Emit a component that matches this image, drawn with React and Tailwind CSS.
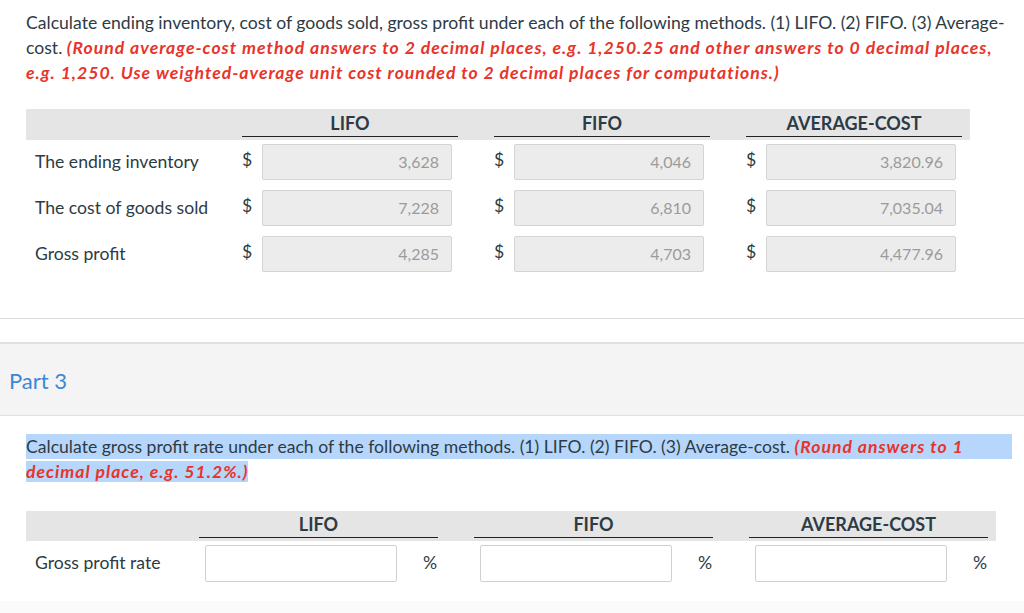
import React from 'react';

const rows = [
  { label: 'The ending inventory', values: ['3,628', '4,046', '3,820.96'] },
  { label: 'The cost of goods sold', values: ['7,228', '6,810', '7,035.04'] },
  { label: 'Gross profit', values: ['4,285', '4,703', '4,477.96'] },
];

const methods = ['LIFO', 'FIFO', 'AVERAGE-COST'];

const Red = ({ children }) => (
  <span className="font-bold italic tracking-[1px] text-[#e8342a]">{children}</span>
);

export default function App() {
  return (
    <div className="min-h-screen bg-white text-[#2d3b45] text-[17.6px]" style={{ fontFamily: 'Lato, "Open Sans", sans-serif' }}>
      {/* Part 2 question */}
      <div className="px-[26px] pt-[10px]">
        <p className="leading-[25px] whitespace-nowrap">
          Calculate ending inventory, cost of goods sold, gross profit under each of the following methods. (1) LIFO. (2) FIFO. (3) Average-
          <br />
          cost. <Red>(Round average-cost method answers to 2 decimal places, e.g. 1,250.25 and other answers to 0 decimal places,</Red>
          <br />
          <Red>e.g. 1,250. Use weighted-average unit cost rounded to 2 decimal places for computations.)</Red>
        </p>

        <div className="mt-[24px] w-[944px]">
          <div className="flex h-[31px] bg-[#e5e5e5]">
            <div className="w-[216px] shrink-0" />
            {methods.map((m) => (
              <div key={m} className="w-[216px] shrink-0 mr-[36px] last:mr-0 flex items-end pb-[3px]">
                <div className="w-full text-center text-[18px] font-bold leading-[26px] border-b-[1.5px] border-[#222]">{m}</div>
              </div>
            ))}
          </div>
          <div className="flex flex-col gap-[10px] pt-[4px]">
            {rows.map((r) => (
              <div key={r.label} className="flex items-center h-[36px]">
                <div className="w-[216px] shrink-0 pl-[9px]">{r.label}</div>
                {r.values.map((v, i) => (
                  <div key={i} className="w-[216px] shrink-0 mr-[36px] last:mr-0 flex items-center">
                    <span className="w-[20px] -mt-[4px]">$</span>
                    <div className="w-[190px] h-[36px] bg-[#ececec] border border-[#d4d4d4] rounded-[2px] flex items-center justify-end pr-[12px] text-[16px] text-[#9b9b9b]">
                      {v}
                    </div>
                  </div>
                ))}
              </div>
            ))}
          </div>
        </div>
      </div>

      <div className="mt-[46px] border-t border-[#dcdcdc] h-[24px]" />

      {/* Part 3 header */}
      <div className="h-[74px] bg-[#f4f4f4] border-t-2 border-b border-[#e0e0e0] flex items-center pl-[9px]">
        <span className="text-[22px] text-[#3a87d8] mt-[2px]">Part 3</span>
      </div>

      <div className="px-[26px] pt-[18px]">
        <div className="leading-[25px]">
          <div className="w-[986px] bg-[#b6d6fb] whitespace-nowrap">
            Calculate gross profit rate under each of the following methods. (1) LIFO. (2) FIFO. (3) Average-cost. <Red>(Round answers to 1</Red>
          </div>
          <div>
            <span className="bg-[#b6d6fb]"><Red>decimal place, e.g. 51.2%.)</Red></span>
          </div>
        </div>

        <div className="mt-[27px] w-[970px]">
          <div className="flex h-[30px] bg-[#e5e5e5]">
            <div className="w-[173px] shrink-0" />
            {methods.map((m) => (
              <div key={m} className="w-[239px] shrink-0 mr-[36px] last:mr-0 flex items-end pb-[3px]">
                <div className="w-full text-center text-[18px] font-bold leading-[26px] border-b-[1.5px] border-[#222]">{m}</div>
              </div>
            ))}
          </div>
          <div className="flex items-center h-[37px] mt-[4px]">
            <div className="w-[173px] shrink-0 pl-[9px]">Gross profit rate</div>
            {methods.map((m) => (
              <div key={m} className="w-[239px] shrink-0 mr-[36px] last:mr-0 flex items-center">
                <div className="ml-[6px] w-[192px] h-[37px] bg-white border border-[#d0d0d0] rounded-[2px]" />
                <span className="ml-[26px]">%</span>
              </div>
            ))}
          </div>
        </div>
      </div>
      <div className="mt-[19px] h-[20px] bg-[#fafafa]" />
    </div>
  );
}
